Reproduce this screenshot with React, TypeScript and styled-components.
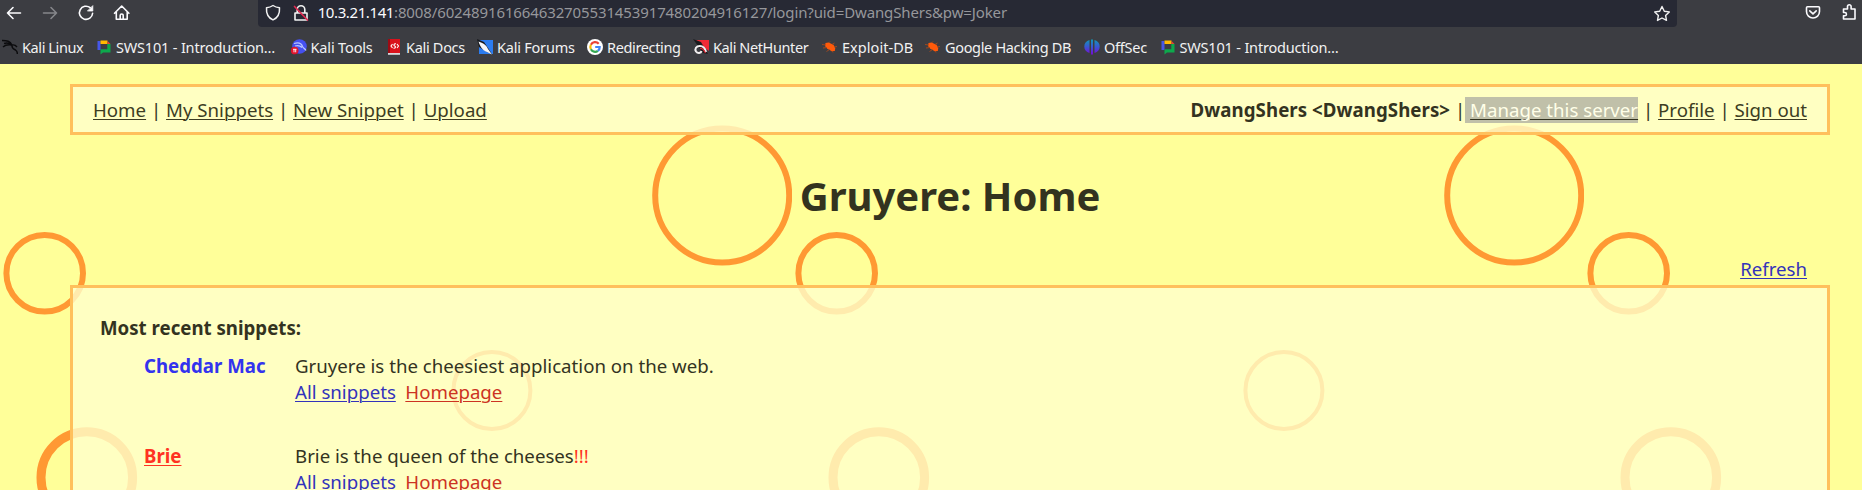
import React from 'react';
import styled, { createGlobalStyle } from 'styled-components';

const GlobalStyle = createGlobalStyle`
  * { box-sizing: border-box; }
  html, body { margin: 0; padding: 0; background: #ffff99; overflow: hidden; }
  body { font-family: "Noto Sans", "Open Sans", sans-serif; }
  svg { display: block; flex: none; }
`;

const Window = styled.div`
  width: 1862px;
  height: 490px;
  display: flex;
  flex-direction: column;
  overflow: hidden;
`;

const Chrome = styled.header`
  flex: none;
  height: 64px;
  background: #3c3d42;
  color: #f2f2f2;
`;

const Toolbar = styled.div`
  display: flex;
  align-items: flex-start;
  height: 31px;
`;

const NavButtons = styled.nav`
  display: flex;
  width: 258px;
  gap: 12px;
  padding: 1px 0 0 2px;
`;

const IconButton = styled.button<{ $dim?: boolean }>`
  width: 24px;
  height: 24px;
  padding: 0;
  border: 0;
  background: none;
  color: ${(p) => (p.$dim ? '#85868a' : '#fbfbfe')};
`;

const AddressBar = styled.div`
  display: flex;
  align-items: center;
  width: 1420.5px;
  height: 27px;
  padding: 0 5.5px 2px 3px;
  background: #272934;
  border-radius: 0 0 4px 4px;
`;

const Url = styled.span`
  flex: 1;
  padding: 0 0 2px 5px;
  font-size: 15px;
  line-height: 24px;
  letter-spacing: -0.12px;
  white-space: nowrap;
  color: #96979b;
`;

const Host = styled.span`
  color: #fbfbfe;
  letter-spacing: -0.4px;
`;

const Extensions = styled.div`
  display: flex;
  gap: 13px;
  padding: 0 0 0 124.5px;
`;

const BookmarkBar = styled.div`
  display: flex;
  align-items: center;
  height: 32px;
  padding-left: 2px;
`;

const Bookmark = styled.a<{ $slot: number; $tracking: number }>`
  flex: none;
  display: flex;
  align-items: center;
  gap: 4px;
  width: ${(p) => p.$slot}px;
  font-size: 14.5px;
  line-height: 24px;
  letter-spacing: ${(p) => p.$tracking}px;
  white-space: nowrap;
`;

const Page = styled.main`
  position: relative;
  flex: 1;
  display: flex;
  flex-direction: column;
  padding: 20px 32px 0 70px;
  font-size: 18.667px;
  line-height: 26px;
  color: #33331f;
  isolation: isolate;
`;

const Holes = styled.svg`
  position: absolute;
  inset: 0;
  z-index: -1;
`;

const Panel = styled.section`
  border: 3px solid #ffc05c;
  background: rgba(255, 255, 204, 0.8);
`;

const MenuBar = styled(Panel)`
  display: flex;
  flex: none;
  justify-content: space-between;
  height: 51px;
  padding: 9.5px 20px 0;
  white-space: pre;
`;

const UserName = styled.b`
  letter-spacing: 0.06px;
`;

const Link = styled.a<{ $color?: string }>`
  color: ${(p) => p.$color ?? '#3d3d22'};
  text-decoration: underline;
  text-decoration-thickness: 1px;
  text-underline-offset: 2px;
`;

const Selected = styled.span`
  display: inline-block;
  height: 26px;
  background: #c0c0a9;
  color: #33331f;
  text-decoration-color: #33331f;

  ${Link} {
    text-decoration-color: #33331f;
  }
`;

const Title = styled.h1`
  flex: none;
  margin: 33px 0 0;
  text-align: center;
  font-size: 40px;
  line-height: 56px;
`;

const Actions = styled.div`
  flex: none;
  display: flex;
  justify-content: flex-end;
  padding: 32px 23px 3px 0;
`;

const SnippetPanel = styled(Panel)`
  flex: none;
  height: 300px;
  padding: 27px;
`;

const PanelHeading = styled.h2`
  margin: 0 0 12px;
  font-size: inherit;
  line-height: inherit;
`;

const Snippet = styled.article`
  display: grid;
  grid-template-columns: 151px 1fr;
  height: 90px;
  padding-left: 44px;
`;

const Author = styled.strong<{ $color: string; $underline?: boolean }>`
  color: ${(p) => p.$color};
  text-decoration: ${(p) => (p.$underline ? 'underline 1px' : 'none')};
  text-underline-offset: 2px;
`;

const SnippetLinks = styled.div`
  display: flex;
  gap: 9.5px;
`;

const Shout = styled.span`
  color: #ff3322;
`;

const line = {
  fill: 'none',
  stroke: 'currentColor',
  strokeWidth: 1.6,
  strokeLinecap: 'round',
  strokeLinejoin: 'round',
} as const;

const BackIcon = () => (
  <svg width="24" height="24" {...line}><path d="M18.5 12H5.5M11 6.5L5.5 12l5.5 5.5" /></svg>
);
const ForwardIcon = () => (
  <svg width="24" height="24" {...line}><path d="M5.500 12H18.500M13 6.500L18.500 12l-5.500 5.500" /></svg>
);
const ReloadIcon = () => (
  <svg width="24" height="24" {...line}>
    <path d="M16.2 6.700A6.600 6.600 0 1 0 18.600 12.200" />
    <path d="M18.800 5v5h-5z" fill="currentColor" strokeWidth="0.8" />
  </svg>
);
const HomeIcon = () => (
  <svg width="24" height="24" {...line}>
    <path d="M4.500 12.300L11.700 5l7.200 7.300M6.300 11v7.200h10.900V11M10.200 18v-3.500a1.500 1.500 0 0 1 3 0V18" />
  </svg>
);
const ShieldIcon = () => (
  <svg width="24" height="24" {...line} strokeWidth="1.500">
    <path d="M12 4.500c2 1.400 4 2 6.500 2.200.4 5.500-1.600 10-6.500 12.200-4.900-2.200-6.900-6.700-6.500-12.200C8 6.500 10 5.900 12 4.500z" />
  </svg>
);
const InsecureIcon = () => (
  <svg width="24" height="24" viewBox="0 0 24 24" {...line}>
    <path d="M8.200 11.500V8.500a3.800 3.800 0 0 1 7.600 0v3M6 12h12v7H6z" />
    <path d="M5.500 5.500l13 13.500" stroke="#e22850" strokeWidth="1.700" />
  </svg>
);
const StarIcon = () => (
  <svg width="18" height="24" {...line} strokeWidth="1.400">
    <path d="M9 5.500l2.300 4.700 5 .7-3.700 3.500.9 5L9 17l-4.500 2.400.9-5-3.700-3.500 5-.7z" />
  </svg>
);
const PocketIcon = () => (
  <svg width="24" height="24" {...line}>
    <path d="M6.500 6.800h11a1 1 0 0 1 1 1V11.500a6.500 6.500 0 0 1-13 0V7.800a1 1 0 0 1 1-1zM8.800 10.800l3.200 3 3.200-3" />
  </svg>
);
const PuzzleIcon = () => (
  <svg width="24" height="24" {...line}>
    <path d="M5.500 9h4V6.500a1.800 1.800 0 0 1 3.600 0V9h3.900v10h-11.500v-3.200h1.300a1.600 1.600 0 0 0 0-3.300H5.500z" />
  </svg>
);

const KaliIcon = () => (
  <svg width="16" height="16" fill="none" stroke="#0b0b0d" strokeWidth="1.400">
    <path d="M0 1.500c5 0 8 .5 10 4.500M2 4.500c3-1 6 0 8 1.500M1 8c2-2 6-2.500 9-2-.5 3 1 4 3.500 5 1.500 1 2 2 1.800 4M10 6c2-.5 3.500 0 5 2" />
  </svg>
);
const ChatIcon = () => (
  <svg width="16" height="16">
    <path d="M1.500 2h3v9h-3z" fill="#4657e8" />
    <path d="M4.500 1.500h7v3.500h-7z" fill="#ffba00" />
    <path d="M11.500 2l3 3h-3z" fill="#ea4335" />
    <path d="M11.300 5h3.200v8.500H7L4.500 15.500v-5.300h6.800z" fill="#0da94c" />
  </svg>
);
const ToolsIcon = () => (
  <svg width="16" height="16">
    <circle cx="8.500" cy="7.500" r="7.300" fill="#4550f0" />
    <path d="M3 4.500c5-1.500 7.500 0 8.500 3 1 2 2.500 2 3.500 4M4 7c3-1 5-.5 7 1.500" fill="none" stroke="#b9c6ff" strokeWidth="1.300" />
    <circle cx="3.700" cy="11.500" r="3.800" fill="#e0142c" />
    <path d="M2 10.300h3.500M3 10.300v3M4.700 10.300v3" stroke="#fff" strokeWidth="0.900" />
  </svg>
);
const DocsIcon = () => (
  <svg width="16" height="16">
    <path d="M2 0h12v14H2z" fill="#d9121c" />
    <path d="M2 0h2v14H2z" fill="#9d0b14" />
    <path d="M2 14h12v1.800H2z" fill="#d8d8dc" />
    <path d="M6.500 5L5 7l1.500 2M11 5l1.500 2L11 9M10 4.800C7.500 4.500 7.500 6.500 8.700 7S9.800 9.400 7.500 9.200" fill="none" stroke="#fff" strokeWidth="1.100" />
  </svg>
);
const ForumsIcon = () => (
  <svg width="16" height="16">
    <path d="M2 1h14v14H2z" fill="#2b7cf0" />
    <path d="M0 0l7 3 8 12-5-2L2 8z" fill="#17181c" />
    <path d="M1.500 2.500C7 4 10 7 11 10l4 5.500-5-2.500C5 11 3 7 1.500 2.500z" fill="#f4f6fa" />
  </svg>
);
const GoogleIcon = () => (
  <svg width="16" height="16">
    <circle cx="8" cy="8" r="8" fill="#fff" />
    <g fill="none" strokeWidth="2.200">
      <path d="M11.700 4.800A4.700 4.700 0 0 0 3.900 5.700" stroke="#ea4335" />
      <path d="M3.900 5.700a4.700 4.700 0 0 0 0 4.600" stroke="#fbbc05" />
      <path d="M3.900 10.300a4.700 4.700 0 0 0 7 1.500" stroke="#34a853" />
      <path d="M10.900 11.800A4.600 4.600 0 0 0 12.700 8H8.200" stroke="#4285f4" />
    </g>
  </svg>
);
const NetHunterIcon = () => (
  <svg width="16" height="16">
    <path d="M3 1h13v11l-4-3z" fill="#ef2b36" />
    <path d="M0 0l8 3 7 12-5-1z" fill="#1a1a1d" />
    <path d="M13 13c-1-4-3-6-6-6-4 0-5.500 3-4 5.500 1.500 2 5 2 5.500-.5" fill="none" stroke="#f3f0f1" strokeWidth="2" />
    <path d="M12.500 14c-1.500-3-3-5-5.500-4.500" fill="none" stroke="#d92735" strokeWidth="1.200" />
  </svg>
);
const BugIcon = () => (
  <svg width="16" height="16">
    <path d="M3.500 4l3-.5 5 2.200 1.800 3.300-.5 3-3 .3-4.500-2.500L3 7z" fill="#ff5a0a" />
    <path d="M4 6L0 5.500M5 8.500L1 9M7.500 10.500L4.500 12.500M6.500 4L8 2.500M10 5.500L12.500 4M12 8l3-.5M10 12l1 1.500" stroke="#a8491d" strokeWidth="0.900" />
  </svg>
);
const OffSecIcon = () => (
  <svg width="16" height="16">
    <defs>
      <linearGradient id="offsec" x1="0" y1="0" x2="0" y2="1">
        <stop offset="0" stopColor="#1098b8" />
        <stop offset="0.500" stopColor="#3a55d2" />
        <stop offset="1" stopColor="#7a08d8" />
      </linearGradient>
    </defs>
    <path d="M5.500 1v13C2 13 .3 10.500.3 7.500S2 2 5.500 1zM10.500 1v13c3.500-1 5.200-3.500 5.200-6.500S14 2 10.500 1zM7 .5h2v15H7z" fill="url(#offsec)" />
  </svg>
);

const bookmarks = [
  { label: 'Kali Linux', slot: 94, tracking: -0.4, Icon: KaliIcon },
  { label: 'SWS101 - Introduction…', slot: 194.5, tracking: -0.18, Icon: ChatIcon },
  { label: 'Kali Tools', slot: 95.5, tracking: -0.15, Icon: ToolsIcon },
  { label: 'Kali Docs', slot: 91, tracking: -0.3, Icon: DocsIcon },
  { label: 'Kali Forums', slot: 110, tracking: -0.22, Icon: ForumsIcon },
  { label: 'Redirecting', slot: 106, tracking: -0.36, Icon: GoogleIcon },
  { label: 'Kali NetHunter', slot: 129, tracking: -0.4, Icon: NetHunterIcon },
  { label: 'Exploit-DB', slot: 103, tracking: 0.05, Icon: BugIcon },
  { label: 'Google Hacking DB', slot: 159, tracking: -0.33, Icon: BugIcon },
  { label: 'OffSec', slot: 75.5, tracking: -0.25, Icon: OffSecIcon },
  { label: 'SWS101 - Introduction…', slot: 190, tracking: -0.18, Icon: ChatIcon },
];

const CheeseHoles = () => (
  <Holes width="1862" height="426">
    <defs>
      <pattern id="cheese" width="792" height="600" patternUnits="userSpaceOnUse">
        <rect width="792" height="600" fill="#ffff99" />
        <g fill="none" stroke="#ff9933">
          <circle cx="722.200" cy="131.400" r="67" strokeWidth="6" />
          <circle cx="44.700" cy="209.300" r="38.300" strokeWidth="6" />
          <circle cx="491.900" cy="326.500" r="38.500" strokeWidth="4" />
          <circle cx="86.800" cy="413.500" r="45.800" strokeWidth="9" />
        </g>
      </pattern>
    </defs>
    <rect width="1862" height="426" fill="url(#cheese)" />
  </Holes>
);

export default function App() {
  return (
    <Window>
      <GlobalStyle />
      <Chrome>
        <Toolbar>
          <NavButtons>
            <IconButton><BackIcon /></IconButton>
            <IconButton $dim><ForwardIcon /></IconButton>
            <IconButton><ReloadIcon /></IconButton>
            <IconButton><HomeIcon /></IconButton>
          </NavButtons>
          <AddressBar>
            <ShieldIcon />
            <svg width="4" height="1" />
            <InsecureIcon />
            <Url>
              <Host>10.3.21.141</Host>
              :8008/602489161664632705531453917480204916127/login?uid=DwangShers&amp;pw=Joker
            </Url>
            <StarIcon />
          </AddressBar>
          <Extensions>
            <IconButton><PocketIcon /></IconButton>
            <IconButton><PuzzleIcon /></IconButton>
          </Extensions>
        </Toolbar>
        <BookmarkBar>
          {bookmarks.map(({ label, slot, tracking, Icon }, i) => (
            <Bookmark key={i} $slot={slot} $tracking={tracking}>
              <Icon />
              {label}
            </Bookmark>
          ))}
        </BookmarkBar>
      </Chrome>
      <Page>
        <CheeseHoles />
        <MenuBar>
          <div>
            <Link>Home</Link> | <Link>My Snippets</Link> | <Link>New Snippet</Link> | <Link>Upload</Link>
          </div>
          <div>
            <UserName>DwangShers &lt;DwangShers&gt;</UserName> |<Selected> <Link $color="#ffffe8">Manage this server</Link></Selected> | <Link>Profile</Link> | <Link>Sign out</Link>
          </div>
        </MenuBar>
        <Title>Gruyere: Home</Title>
        <Actions>
          <Link $color="#3333bb">Refresh</Link>
        </Actions>
        <SnippetPanel>
          <PanelHeading>Most recent snippets:</PanelHeading>
          <Snippet>
            <Author $color="#3333ee">Cheddar Mac</Author>
            <div>
              Gruyere is the cheesiest application on the web.
              <SnippetLinks>
                <Link $color="#3333bb">All snippets</Link>
                <Link $color="#cc3322">Homepage</Link>
              </SnippetLinks>
            </div>
          </Snippet>
          <Snippet>
            <Author $color="#ff3322" $underline>Brie</Author>
            <div>
              Brie is the queen of the cheeses<Shout>!!!</Shout>
              <SnippetLinks>
                <Link $color="#3333bb">All snippets</Link>
                <Link $color="#cc3322">Homepage</Link>
              </SnippetLinks>
            </div>
          </Snippet>
        </SnippetPanel>
      </Page>
    </Window>
  );
}
